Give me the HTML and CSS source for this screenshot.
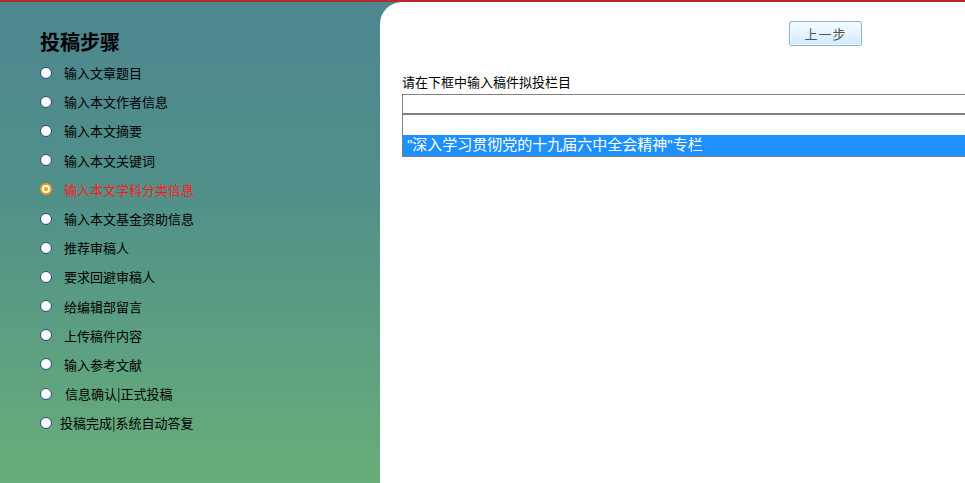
FILE: index.html
```html
<!DOCTYPE html>
<html lang="zh-CN">

<head>
    <meta charset="UTF-8">
    <title>投稿步骤</title>
    <link rel="stylesheet" href="styles.css">
</head>

<body>
    <div class="page">
        <div class="sidebar">
            <h2>投稿步骤</h2>
            <ul class="steps">
                <li><span class="dot"></span>输入文章题目</li>
                <li><span class="dot"></span>输入本文作者信息</li>
                <li><span class="dot"></span>输入本文摘要</li>
                <li><span class="dot"></span>输入本文关键词</li>
                <li class="current"><span class="dot"></span>输入本文学科分类信息</li>
                <li><span class="dot"></span>输入本文基金资助信息</li>
                <li><span class="dot"></span>推荐审稿人</li>
                <li><span class="dot"></span>要求回避审稿人</li>
                <li><span class="dot"></span>给编辑部留言</li>
                <li><span class="dot"></span>上传稿件内容</li>
                <li><span class="dot"></span>输入参考文献</li>
                <li class="shift-r"><span class="dot"></span>信息确认|正式投稿</li>
                <li class="shift-l"><span class="dot"></span>投稿完成|系统自动答复</li>
            </ul>
        </div>
        <div class="main">
            <div class="toolbar">
                <button class="btn">上一步</button>
            </div>
            <label class="field-label">请在下框中输入稿件拟投栏目</label>
            <input class="column-input" type="text">
            <div class="column-list">
                <div class="option"></div>
                <div class="option selected">"深入学习贯彻党的十九届六中全会精神"专栏</div>
            </div>
        </div>
    </div>
</body>

</html>
```

FILE: styles.css
```css
:root {
    --side-top: #4d8690;
    --side-bottom: #68ae79;
    --select-bg: #1e90ff;
    --line: #808080;
}

* {
    box-sizing: border-box;
    margin: 0;
    padding: 0;
}

body {
    font-family: "Noto Sans CJK SC", "Liberation Sans", sans-serif;
    font-size: 13px;
    color: #000;
    border-top: 2px solid #b22a2a;
    background: linear-gradient(to bottom, var(--side-top) 0%, #519089 40%, var(--side-bottom) 100%);
    height: 483px;
    overflow: hidden;
}

.page {
    display: flex;
    height: 481px;
}

.sidebar {
    width: 380px;
    flex-shrink: 0;
    padding: 27px 0 0 40px;
}

.sidebar h2 {
    font-size: 20px;
    font-weight: bold;
    line-height: 26px;
    margin-bottom: 3px;
}

.steps {
    list-style: none;
}

.steps li {
    display: flex;
    align-items: center;
    height: 29.2px;
    line-height: 29px;
}

.dot {
    width: 12px;
    height: 12px;
    border-radius: 50%;
    border: 1px solid #2f4f86;
    background: radial-gradient(circle at 45% 40%, #fff 45%, #dde4ef 100%);
    margin-right: 12px;
    flex-shrink: 0;
}

.steps li.current {
    color: #ff1a1a;
}

.steps li.current .dot {
    border: 2px solid #f29a1e;
    background: radial-gradient(circle, #f5a623 0 2px, #fff 2.5px);
}

.steps li.shift-r .dot {
    margin-right: 13px;
}

.steps li.shift-l .dot {
    margin-right: 8px;
}

.main {
    flex: 1;
    background: #fff;
    border-top-left-radius: 22px;
    padding-left: 22px;
    min-width: 0;
    overflow: hidden;
}

.toolbar {
    height: 70px;
    padding: 19px 0 0 387px;
}

.btn {
    font-family: inherit;
    width: 73px;
    height: 25px;
    font-size: 13px;
    color: #555;
    letter-spacing: 1px;
    border: 1px solid #86b6dc;
    border-radius: 2px;
    background: linear-gradient(to bottom, #f4fbff 0%, #e2f3fd 55%, #cfeafc 100%);
    box-shadow: inset 0 0 0 1px #eef8ff;
    cursor: pointer;
}

.field-label {
    display: block;
    line-height: 19px;
    margin-bottom: 3px;
}

.column-input {
    display: block;
    width: 700px;
    height: 21px;
    border: 1px solid var(--line);
    border-bottom-width: 2px;
    outline: none;
}

.column-list {
    width: 700px;
    border-left: 1px solid var(--line);
    border-bottom: 1px solid var(--line);
}

.option {
    height: 20px;
    font-family: "Liberation Sans", "Noto Sans CJK SC", sans-serif;
    font-size: 15px;
    line-height: 20px;
    padding-left: 4px;
    white-space: nowrap;
}

.option.selected {
    height: 21px;
    background: var(--select-bg);
    color: #fff;
}
```
